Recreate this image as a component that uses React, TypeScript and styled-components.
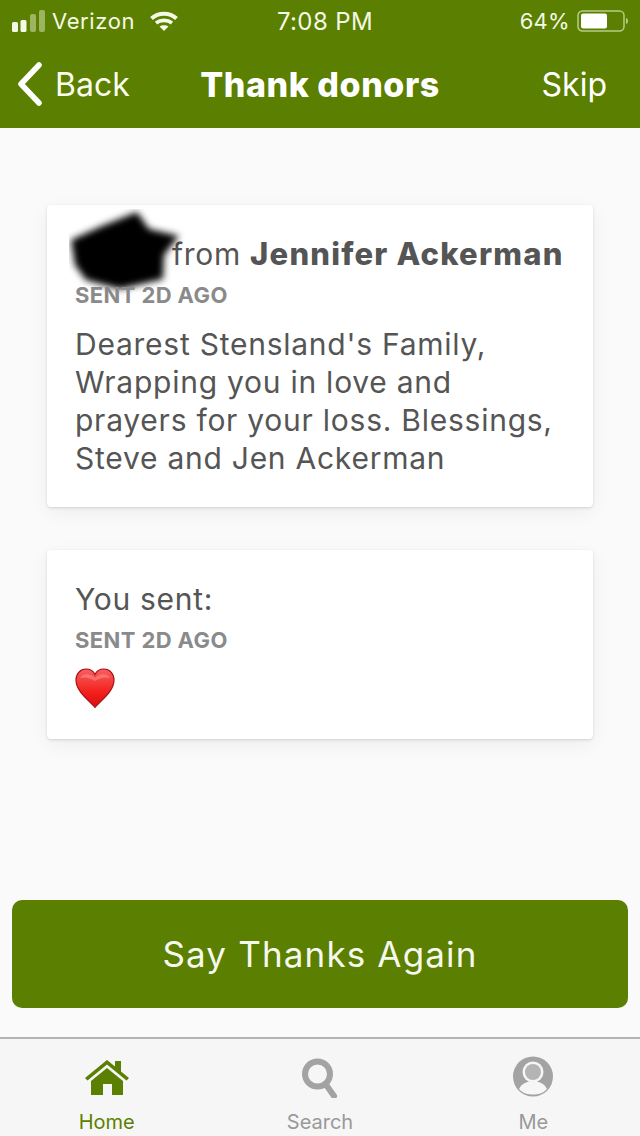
import styled, { createGlobalStyle } from 'styled-components'

const GlobalStyle = createGlobalStyle`
  html, body {
    margin: 0;
    padding: 0;
    background: #fafafa;
  }
  * {
    box-sizing: border-box;
  }
`

const Page = styled.div`
  width: 640px;
  height: 1136px;
  display: flex;
  flex-direction: column;
  font-family: Inter, "Liberation Sans", sans-serif;
  background: #fafafa;
  overflow: hidden;
`

const TopArea = styled.header`
  height: 128px;
  flex-shrink: 0;
  background: #5b7f00;
  color: #fff;
`

const StatusBar = styled.div`
  height: 40px;
  padding: 2px 12px 0 12px;
  display: grid;
  grid-template-columns: 1fr auto 1fr;
  align-items: center;
  font-size: 22px;
  color: #f4f8e6;
`

const StatusLeft = styled.div`
  display: flex;
  align-items: center;
`

const StatusRight = styled.div`
  display: flex;
  align-items: center;
  justify-content: flex-end;
`

const Carrier = styled.span`
  margin-left: 6px;
  margin-right: 15px;
  letter-spacing: 0.6px;
`

const Clock = styled.span`
  margin-left: 10px;
  font-size: 24px;
  letter-spacing: 0.4px;
`

const Percent = styled.span`
  margin-right: 7px;
  letter-spacing: 0.3px;
`

const NavBar = styled.nav`
  height: 88px;
  padding: 0 17px;
  display: grid;
  grid-template-columns: 1fr auto 1fr;
  align-items: center;
  font-size: 32px;
`

const BackLink = styled.a`
  display: flex;
  align-items: center;
  gap: 12px;
  color: #fbfdef;
`

const NavTitle = styled.h1`
  margin: 0;
  font-size: 34px;
  font-weight: 800;
  letter-spacing: 0.55px;
`

const SkipLink = styled.a`
  justify-self: end;
  margin-right: 16px;
`

const Content = styled.main`
  flex: 1;
  padding: 77px 47px 0;
  display: flex;
  flex-direction: column;
  gap: 43px;
`

const Card = styled.section<{ $height: number }>`
  height: ${(p) => p.$height}px;
  padding: 28px 28px 0;
  background: #fff;
  border-radius: 4px;
  box-shadow: 0 1px 3px rgba(0, 0, 0, 0.14), 0 6px 20px rgba(0, 0, 0, 0.05);
  color: #555;
`

const CardHeading = styled.div`
  font-size: 30px;
  line-height: 42px;
  letter-spacing: 0.7px;
  white-space: nowrap;
  position: relative;
`

const Redacted = styled.span`
  display: inline-block;
  width: 97px;
  height: 10px;
  position: relative;
`

const Blob = styled.svg`
  position: absolute;
  left: -6px;
  top: -46px;
`

const Sender = styled.strong`
  font-size: 31px;
  font-weight: 800;
  letter-spacing: 1.2px;
`

const SentAt = styled.div`
  margin-top: 2px;
  font-size: 22px;
  line-height: 36px;
  font-weight: 700;
  letter-spacing: 0.4px;
  color: #8a8a8a;
  position: relative;
`

const Message = styled.p`
  margin: 12px 0 0;
  font-size: 30px;
  line-height: 38px;
  letter-spacing: 0.75px;
  white-space: pre-line;
`

const HeartWrap = styled.div`
  margin-top: 10px;
  height: 42px;
`

const ButtonArea = styled.div`
  padding: 0 12px;
  margin-bottom: 29px;
`

const ThanksButton = styled.button`
  width: 100%;
  height: 108px;
  border: 0;
  border-radius: 10px;
  background: #5b7f00;
  color: #f6f8ee;
  font-family: inherit;
  font-size: 35px;
  letter-spacing: 1.15px;
`

const TabBar = styled.footer`
  height: 99px;
  flex-shrink: 0;
  border-top: 2px solid #b4b4b4;
  background: #f6f6f6;
  display: grid;
  grid-template-columns: repeat(3, 1fr);
`

const Tab = styled.a<{ $active?: boolean }>`
  padding-top: 17px;
  display: flex;
  flex-direction: column;
  align-items: center;
  font-size: 20px;
  color: ${(p) => (p.$active ? '#5b7f00' : '#999')};
`

const TabIcon = styled.svg`
  display: block;
  height: 42px;
  margin-bottom: 12px;
`

const TabLabel = styled.span`
  line-height: 24px;
`

const SignalIcon = () => (
  <svg width="34" height="22" viewBox="0 0 34 22">
    <rect x="0" y="12" width="6" height="10" rx="1.5" fill="#f4f8e6" />
    <rect x="8.500" y="10" width="6" height="12" rx="1.5" fill="#f4f8e6" />
    <rect x="18" y="4" width="6" height="18" rx="2" fill="#9db561" />
    <rect x="27" y="0" width="6" height="22" rx="2" fill="#9db561" />
  </svg>
)

const WifiIcon = () => (
  <svg width="28" height="20" viewBox="0 0 28 20" fill="none" stroke="#f4f8e6">
    <path d="M1.500 7.500C8.500 1 19.500 1 26.500 7.500" strokeWidth="4" />
    <path d="M6 12C10.500 8.500 17.500 8.500 22 12" strokeWidth="3.600" />
    <path d="M14 20L9.500 15.500C12 13.800 16 13.800 18.500 15.500Z" fill="#f4f8e6" stroke="none" />
  </svg>
)

const BatteryIcon = () => (
  <svg width="51" height="22" viewBox="0 0 51 22">
    <rect x="1" y="1" width="46" height="20" rx="4.500" fill="none" stroke="#b9cb87" strokeWidth="1.500" />
    <rect x="4" y="3.500" width="26" height="15" rx="2" fill="#fff" />
    <path d="M49 8c1.500.4 2 1.500 2 3s-.5 2.600-2 3z" fill="#b9cb87" />
  </svg>
)

const BackChevron = () => (
  <svg width="26" height="44" viewBox="0 0 26 44" fill="none">
    <path d="M22 3L4 22L22 41" stroke="#fff" strokeWidth="5.500" strokeLinecap="round" strokeLinejoin="round" />
  </svg>
)

const Heart = () => (
  <svg width="40" height="40" viewBox="0 0 40 40">
    <defs>
      <linearGradient id="heartFill" x1="0" y1="0" x2="0" y2="1">
        <stop offset="0" stopColor="#f8605f" />
        <stop offset="0.6" stopColor="#f3201c" />
        <stop offset="1" stopColor="#d80d10" />
      </linearGradient>
    </defs>
    <path
      d="M20 39.500C15 33 1 24 1 12C1 5.500 5.500 1 11 1C15 1 18.500 3 20 6.500C21.500 3 25 1 29 1C34.500 1 39 5.500 39 12C39 24 25 33 20 39.500Z"
      fill="url(#heartFill)"
      stroke="#a80f18"
      strokeWidth="1.200"
    />
    <path d="M5 10C7 5.500 15 4.500 20 10C25 4.500 33 5.500 35 10C30 8.500 25 10 20 13C15 10 10 8.500 5 10Z" fill="#fff" opacity="0.22" />
  </svg>
)

const App = () => (
  <>
    <GlobalStyle />
    <Page>
      <TopArea>
        <StatusBar>
          <StatusLeft>
            <SignalIcon />
            <Carrier>Verizon</Carrier>
            <WifiIcon />
          </StatusLeft>
          <Clock>7:08 PM</Clock>
          <StatusRight>
            <Percent>64%</Percent>
            <BatteryIcon />
          </StatusRight>
        </StatusBar>
        <NavBar>
          <BackLink>
            <BackChevron />
            Back
          </BackLink>
          <NavTitle>Thank donors</NavTitle>
          <SkipLink>Skip</SkipLink>
        </NavBar>
      </TopArea>
      <Content>
        <Card $height={302}>
          <CardHeading>
            <Redacted>
              <Blob width="118" height="92" viewBox="0 0 118 92">
                <defs>
                  <filter id="soft" x="-15%" y="-15%" width="130%" height="130%">
                    <feGaussianBlur stdDeviation="3.500" />
                  </filter>
                </defs>
                <path
                  d="M2 31L33 17L68 3L80 20L110 27L95 46L94 70L51 80L17 71L6 56Z"
                  fill="#000"
                  filter="url(#soft)"
                />
              </Blob>
            </Redacted>
            from <Sender>Jennifer Ackerman</Sender>
          </CardHeading>
          <SentAt>SENT 2D AGO</SentAt>
          <Message>
            {"Dearest Stensland's Family,\nWrapping you in love and\nprayers for your loss. Blessings,\nSteve and Jen Ackerman"}
          </Message>
        </Card>
        <Card $height={189}>
          <CardHeading>You sent:</CardHeading>
          <SentAt>SENT 2D AGO</SentAt>
          <HeartWrap>
            <Heart />
          </HeartWrap>
        </Card>
      </Content>
      <ButtonArea>
        <ThanksButton>Say Thanks Again</ThanksButton>
      </ButtonArea>
      <TabBar>
        <Tab $active>
          <TabIcon width="44" height="42" viewBox="0 0 44 42" fill="#5b7f00">
            <path d="M22 4L30 10.500V5H36V15.500L44 22L41.500 24.500L22 8.500L2.500 24.500L0 22Z" />
            <path d="M22 12L38 25V39H27V28H18V39H6V25Z" />
          </TabIcon>
          <TabLabel>Home</TabLabel>
        </Tab>
        <Tab>
          <TabIcon width="36" height="42" viewBox="0 0 36 42" fill="none" stroke="#a3a3a3">
            <circle cx="15.500" cy="18" r="12.500" strokeWidth="6" />
            <path d="M23.500 28L32 40" strokeWidth="6" strokeLinecap="round" />
          </TabIcon>
          <TabLabel>Search</TabLabel>
        </Tab>
        <Tab>
          <TabIcon width="42" height="42" viewBox="0 0 42 42">
            <circle cx="21" cy="20.500" r="20" fill="#a3a3a3" />
            <path d="M7 33C10 27 15 25.500 21 25.500S32 27 35 33C31 37.500 26 38.500 21 38.500S11 37.500 7 33Z" fill="#f6f6f6" />
            <circle cx="21" cy="16" r="10.500" fill="#f6f6f6" />
            <circle cx="21" cy="16" r="8" fill="#b4b4b4" />
          </TabIcon>
          <TabLabel>Me</TabLabel>
        </Tab>
      </TabBar>
    </Page>
  </>
)

export default App
